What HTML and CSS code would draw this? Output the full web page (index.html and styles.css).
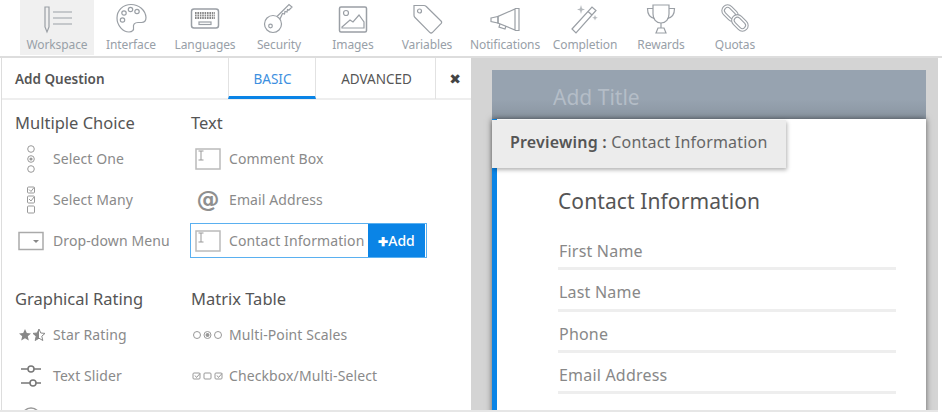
FILE: index.html
```html
<!DOCTYPE html>
<html lang="en">
<head>
    <meta charset="UTF-8">
    <title>Survey Workspace</title>
    <link rel="stylesheet" href="styles.css">
</head>
<body>
    <svg class="defs" width="0" height="0">
        <symbol id="textbox" viewBox="0 0 26 22">
            <rect x="1" y="1" width="24" height="20" fill="none" stroke="#bbb" stroke-width="1.5"/>
            <path d="M3.5 3h5M6 3v9M3.5 12h5" fill="none" stroke="#999" stroke-width="1"/>
        </symbol>
    </svg>

    <div class="page">
        <!-- top toolbar -->
        <nav class="toolbar">
            <a class="tool active">
                <svg class="tool-icon" viewBox="0 0 32 32"><path d="M4 5h4v20l-2 5-2-5z" /><path d="M12 10h19M12 16h19M12 22h19"/></svg>
                <span>Workspace</span>
            </a>
            <a class="tool">
                <svg class="tool-icon" viewBox="0 0 32 32"><path d="M16 2.500C8 2.500 2 8.500 2 16s6 14 12 14c3.500 0 5-2 4.500-4.500-.5-3 1-5 4.500-5h3.500c3 0 4.500-2 4.500-5C30.500 8 24 2.500 16 2.500z"/><circle cx="9" cy="11" r="2.200"/><circle cx="15.500" cy="7.500" r="2.200"/><circle cx="22" cy="9.500" r="2.200"/><circle cx="7.500" cy="18" r="2.200"/></svg>
                <span>Interface</span>
            </a>
            <a class="tool">
                <svg class="tool-icon" viewBox="0 0 32 32"><rect x="2.500" y="7" width="27" height="19" rx="2.500" stroke-width="1.500"/><path class="dots" d="M6 11h20M6 13.500h20M6 16h20" stroke-dasharray="1.600 .8" stroke-width="1.800"/><rect x="10" y="20" width="12" height="2.500"/></svg>
                <span>Languages</span>
            </a>
            <a class="tool">
                <svg class="tool-icon" viewBox="0 0 32 32"><circle cx="10" cy="22" r="8.500"/><circle cx="7.500" cy="24" r="1.800"/><path d="M14 14.500L26 2.500l3 2.500-3 3-1.500-.5-.5 2.500-2-.5-.5 2.500-2-.5L17 17"/></svg>
                <span>Security</span>
            </a>
            <a class="tool">
                <svg class="tool-icon" viewBox="0 0 32 32"><rect x="2.500" y="5" width="27" height="25" rx="1.500" stroke-width="1.500"/><circle cx="9" cy="11" r="2.500"/><path d="M5 25l8-7 3 2 6-7 5 7v6H5z"/></svg>
                <span>Images</span>
            </a>
            <a class="tool">
                <svg class="tool-icon" viewBox="0 0 32 32"><path d="M3 3.500h10c1 0 1.500.3 2.300 1L30 19c.8.800.8 1.800 0 2.700L21.500 30.300c-.9.900-1.900.9-2.800 0L4 15.500c-.7-.7-1-1.300-1-2.300z"/><circle cx="8.500" cy="9" r="2"/></svg>
                <span>Variables</span>
            </a>
            <a class="tool notifications">
                <svg class="tool-icon" viewBox="0 0 32 32"><path d="M26 7v21L9 21v-6.500z"/><path d="M26 6.500h4v22h-4M2 16l7-1.500V21l-7-1.500zM11 22l-1 3 6 2 1-3"/></svg>
                <span>Notifications</span>
            </a>
            <a class="tool completion">
                <svg class="tool-icon" viewBox="0 0 32 32"><path d="M3 27L23 5l4 3.500L7 31z"/><path d="M19 9.500l4 3.500"/><path class="fill" d="M12 3l1 3.500 3 1-3 1-1 3.500-1-3.500-3-1 3-1zM26 13l.8 2 2 .8-2 .8-.8 2-.8-2-2-.8 2-.8z"/></svg>
                <span>Completion</span>
            </a>
            <a class="tool rewards">
                <svg class="tool-icon" viewBox="0 0 32 32"><path d="M8 3h16v9c0 5-3 9-8 9s-8-4-8-9z"/><path d="M8 6.500H2.500c0 6 2 9 7 10M24 6.500h5.500c0 6-2 9-7 10"/><path d="M16 21v5M13 26h6l2 5H11z"/></svg>
                <span>Rewards</span>
            </a>
            <a class="tool">
                <svg class="tool-icon" viewBox="-2 -2 36 36"><g transform="rotate(-45 10.500 10.500)"><rect x="4" y="0" width="13" height="21" rx="6.500"/><rect x="7" y="3" width="7" height="15" rx="3.500"/></g><g transform="rotate(-45 21.500 21.500)"><rect x="15" y="11" width="13" height="21" rx="6.500" fill="#fff"/><rect x="18" y="14" width="7" height="15" rx="3.500"/></g></svg>
                <span>Quotas</span>
            </a>
        </nav>

        <div class="workspace">
            <!-- question list -->
            <section class="panel">
                <header class="panel-head">
                    <h2 class="panel-title">Add Question</h2>
                    <div class="tab active-tab">BASIC</div>
                    <div class="tab advanced">ADVANCED</div>
                    <div class="close">&#10006;</div>
                </header>
                <div class="panel-body">
                    <div class="group">
                        <div class="column">
                            <h3>Multiple Choice</h3>
                            <div class="row">
                                <svg class="row-icon" viewBox="0 0 36 28"><g class="line"><circle cx="18" cy="4" r="3.300"/><circle cx="18" cy="14" r="3.300"/><circle cx="18" cy="24" r="3.300"/></g><circle cx="18" cy="14" r="1.600" fill="#999"/></svg>
                                <span>Select One</span>
                            </div>
                            <div class="row">
                                <svg class="row-icon" viewBox="0 0 36 28"><g class="line"><rect x="14.500" y="1" width="7" height="6" rx="1"/><rect x="14.500" y="10" width="7" height="7" rx="1"/><rect x="14.500" y="20" width="7" height="7" rx="1"/><path d="M16 3.500l2 2 3-4M16 13l2 2 3-4"/></g></svg>
                                <span>Select Many</span>
                            </div>
                            <div class="row">
                                <svg class="row-icon" viewBox="0 0 36 24"><rect x="6" y="3.500" width="24" height="17" fill="none" stroke="#aaa" stroke-width="1.500"/><path d="M20 11h6l-3 3z" fill="#888"/></svg>
                                <span>Drop-down Menu</span>
                            </div>
                        </div>
                        <div class="column">
                            <h3>Text</h3>
                            <div class="row wide-row">
                                <svg class="box-icon"><use href="#textbox"/></svg>
                                <span>Comment Box</span>
                            </div>
                            <div class="row wide-row">
                                <span class="at">@</span>
                                <span>Email Address</span>
                            </div>
                            <div class="row wide-row selected">
                                <svg class="box-icon"><use href="#textbox"/></svg>
                                <span>Contact Information</span>
                                <button class="add-btn"><b>&#10010;</b>Add</button>
                            </div>
                        </div>
                    </div>
                    <div class="group lower">
                        <div class="column">
                            <h3>Graphical Rating</h3>
                            <div class="row">
                                <svg class="row-icon" viewBox="0 0 36 16"><path d="M12 2l1.800 4 4.200.4-3.200 2.800 1 4.300L12 11.200 8.200 13.500l1-4.300L6 6.400l4.200-.4z" fill="#888"/><path d="M26 2l1.800 4 4.200.4-3.200 2.800 1 4.300L26 11.200l-3.800 2.300 1-4.300L20 6.400l4.200-.4z" fill="none" stroke="#888"/><path d="M26 2v9.200l-3.800 2.300 1-4.300L20 6.400l4.200-.4z" fill="#888"/></svg>
                                <span>Star Rating</span>
                            </div>
                            <div class="row">
                                <svg class="row-icon" viewBox="0 0 36 24"><g class="line dark"><path d="M8 5h20M8 19h20"/><circle cx="18" cy="5" r="3" fill="#fff"/><circle cx="20" cy="19" r="3" fill="#fff"/></g></svg>
                                <span>Text Slider</span>
                            </div>
                            <div class="row">
                                <svg class="row-icon" viewBox="0 0 36 24"><circle cx="18" cy="12" r="9" fill="none" stroke="#999" stroke-width="1.500"/></svg>
                            </div>
                        </div>
                        <div class="column">
                            <h3>Matrix Table</h3>
                            <div class="row">
                                <svg class="matrix-icon" viewBox="0 0 32 10"><g class="line"><circle cx="5" cy="5" r="3.500"/><circle cx="15.500" cy="5" r="3.500"/><circle cx="26" cy="5" r="3.500"/></g><circle cx="15.500" cy="5" r="2" fill="#999"/></svg>
                                <span>Multi-Point Scales</span>
                            </div>
                            <div class="row">
                                <svg class="matrix-icon" viewBox="0 0 32 10"><g class="line"><rect x="1" y="2" width="7" height="6" rx="1"/><rect x="12" y="2" width="7" height="6" rx="1"/><rect x="23" y="2" width="7" height="6" rx="1"/><path d="M3 4.500l1.500 2 3.500-4M25 4.500l1.500 2 3.500-4"/></g></svg>
                                <span>Checkbox/Multi-Select</span>
                            </div>
                        </div>
                    </div>
                </div>
            </section>

            <!-- survey preview -->
            <section class="preview">
                <div class="title-bar">Add Title</div>
                <div class="card">
                    <div class="previewing"><b>Previewing :</b> Contact Information</div>
                    <h1 class="form-title">Contact Information</h1>
                    <div class="field">First Name</div>
                    <div class="field">Last Name</div>
                    <div class="field">Phone</div>
                    <div class="field">Email Address</div>
                </div>
            </section>
        </div>
    </div>
</body>
</html>
```

FILE: styles.css
```css
* {
    box-sizing: border-box;
}
body {
    margin: 0;
    background: #fff;
    font-family: "Noto Sans", "Open Sans", sans-serif;
    color: #8a8a8a;
}
.defs {
    display: block;
    height: 0;
}
.page {
    width: 942px;
    height: 416px;
    overflow: hidden;
}

/* toolbar */
.toolbar {
    display: flex;
    height: 58px;
    padding-left: 20px;
    border-bottom: 2px solid #ddd;
}
.tool {
    width: 74px;
    height: 55px;
    display: flex;
    flex-direction: column;
    align-items: center;
    padding-top: 2px;
    font-size: 12px;
    color: #98a0a8;
}
.tool span {
    line-height: 16px;
    margin-top: 3px;
    white-space: nowrap;
    letter-spacing: -0.1px;
}
.tool.active {
    background: #f0f0f0;
}
.notifications {
    width: 82px;
}
.completion {
    width: 78px;
}
.tool-icon {
    width: 32px;
    height: 32px;
    fill: none;
    stroke: #9a9fa5;
    stroke-width: 1.2;
}
.tool-icon .fill {
    fill: #b5b9bd;
    stroke: none;
}
.tool-icon .dots {
    stroke: #888;
}

/* main area */
.workspace {
    display: flex;
    height: 354px;
    padding-left: 1px;
    width: 938px;
    border-bottom: 2px solid #e6e6e6;
}
.panel {
    width: 470px;
    border-left: 1px solid #ddd;
    overflow: hidden;
}
.panel-head {
    display: flex;
    height: 42px;
    border-bottom: 2px solid #eee;
}
.panel-title {
    width: 226px;
    margin: 0;
    padding-left: 13px;
    font-size: 13.500px;
    line-height: 42px;
    font-weight: 600;
    color: #555;
}
.tab {
    line-height: 42px;
    height: 41px;
    text-align: center;
    font-size: 13.500px;
    color: #555;
    border-right: 1px solid #e2e2e2;
}
.active-tab {
    width: 88px;
    padding-left: 1px;
    color: #3d8fe0;
    border-left: 1px solid #e2e2e2;
    border-bottom: 3px solid #0a84e6;
}
.advanced {
    width: 120px;
    padding-left: 2px;
}
.close {
    width: 34px;
    padding-left: 4px;
    text-align: center;
    line-height: 42px;
    font-size: 14px;
    color: #444;
    font-family: "DejaVu Sans", sans-serif;
}
.panel-body {
    padding: 11px 0 0 13px;
}
.group {
    display: flex;
}
.lower {
    margin-top: 26px;
}
.column {
    width: 176px;
}
.column h3 {
    margin: 0 0 3px;
    font-size: 16.500px;
    line-height: 24px;
    font-weight: 400;
    color: #555;
}
.row {
    display: flex;
    align-items: center;
    height: 41px;
    font-size: 14px;
    letter-spacing: 0.1px;
    white-space: nowrap;
}
.row-icon {
    flex-shrink: 0;
    width: 36px;
    height: 28px;
    margin: 0 4px 0 -2px;
}
.line {
    fill: none;
    stroke: #999;
    stroke-width: 1;
}
.line.dark {
    stroke: #777;
    stroke-width: 1.500;
}
.wide-row {
    width: 237px;
    padding-left: 5px;
    margin-left: -1px;
}
.box-icon {
    flex-shrink: 0;
    width: 26px;
    height: 22px;
    margin-right: 8px;
}
.at {
    width: 26px;
    margin-right: 8px;
    text-align: center;
    font: bold 23px/1 "DejaVu Sans", sans-serif;
    color: #8f8f8f;
}
.selected {
    height: 35px;
    margin-top: 3px;
    border: 1px solid #5ab0f0;
    padding-left: 4px;
}
.selected span {
    flex: 1;
}
.add-btn {
    flex-shrink: 0;
    width: 57px;
    height: 33px;
    margin-right: 1px;
    border: none;
    background: #0a84e6;
    color: #fff;
    font-family: inherit;
    font-size: 14px;
    font-weight: 500;
    padding: 0;
}
.add-btn b {
    font-size: 12px;
}
.matrix-icon {
    flex-shrink: 0;
    width: 32px;
    height: 10px;
    margin: 0 5px 0 1px;
}

/* preview */
.preview {
    width: 467px;
    background: #d4d4d4;
    padding: 12px 12px 0 21px;
    overflow: hidden;
}
.title-bar {
    height: 49px;
    padding: 12px 0 0 61px;
    background: linear-gradient(#97a3b0 0%, #97a3b0 60%, #8a95a1 100%);
    color: #b4bdc7;
    font-size: 21px;
    line-height: 30px;
}
.card {
    position: relative;
    height: 320px;
    background: #fff;
    border-left: 5px solid #0a84e6;
    padding: 68px 0 0 61px;
    box-shadow: 0 0 6px rgba(0, 0, 0, 0.55);
}
.previewing {
    position: absolute;
    top: 1px;
    left: -5px;
    width: 294px;
    height: 48px;
    padding-left: 18px;
    background: #ececec;
    font-size: 16px;
    letter-spacing: 0.2px;
    line-height: 45px;
    color: #666;
    box-shadow: 1px 2px 4px rgba(0, 0, 0, 0.3);
    white-space: nowrap;
}
.previewing b {
    font-weight: 600;
    color: #555;
}
.form-title {
    margin: 0 0 14px;
    font-size: 21px;
    letter-spacing: 0.1px;
    line-height: 28px;
    font-weight: 400;
    color: #555;
}
.field {
    width: 338px;
    height: 41.300px;
    padding: 5px 0 0 1px;
    font-size: 16px;
    letter-spacing: 0.2px;
    line-height: 35px;
    border-bottom: 3px solid #eee;
    color: #888;
}
```
